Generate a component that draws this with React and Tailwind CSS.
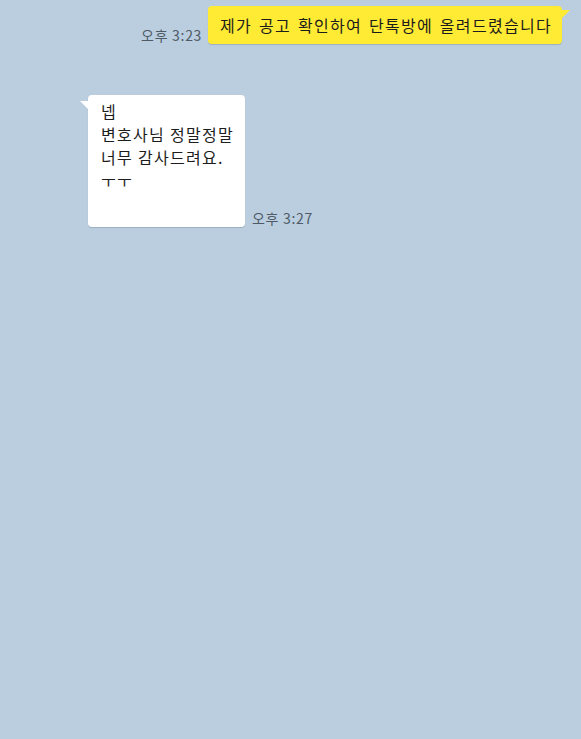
export default function App() {
  return (
    <div
      className="w-[581px] h-[739px] bg-[#bacee0] overflow-hidden"
      style={{ fontFamily: '"Malgun Gothic", "Noto Sans CJK KR", sans-serif' }}
    >
      <div className="flex justify-end items-end gap-[6px] pt-[6px] pr-[19px]">
        <span className="text-[14px] leading-none tracking-[0.7px] text-[#4f5a66] pb-[2px]">오후 3:23</span>
        <div className="relative">
          <div className="bg-[#ffeb33] rounded-[4px] h-[38px] pl-[12px] pr-[10px] flex items-center text-[16px] text-[#1c1c1c] shadow-[0_1px_1px_rgba(0,0,0,0.15)] tracking-[1.3px] [word-spacing:2px]">
            제가 공고 확인하여 단톡방에 올려드렸습니다
          </div>
          <div className="absolute top-[4px] right-[-8px] w-0 h-0 border-t-[9px] border-t-[#ffeb33] border-r-[9px] border-r-transparent" />
        </div>
      </div>

      <div className="flex items-end gap-[7px] mt-[51px] pl-[88px]">
        <div className="relative">
          <div className="bg-white rounded-[4px] w-[157px] h-[132px] pl-[13px] pt-[5px] text-[16px] leading-[23px] tracking-[1.3px] text-[#1c1c1c] shadow-[0_1px_1px_rgba(0,0,0,0.15)]">
            <div>넵</div>
            <div>변호사님 정말정말</div>
            <div>너무 감사드려요.</div>
            <div>ㅜㅜ</div>
          </div>
          <div className="absolute top-[6px] left-[-8px] w-0 h-0 border-t-[9px] border-t-white border-l-[9px] border-l-transparent" />
        </div>
        <span className="text-[14px] leading-none tracking-[0.7px] text-[#4f5a66] pb-[2px]">오후 3:27</span>
      </div>
    </div>
  );
}
